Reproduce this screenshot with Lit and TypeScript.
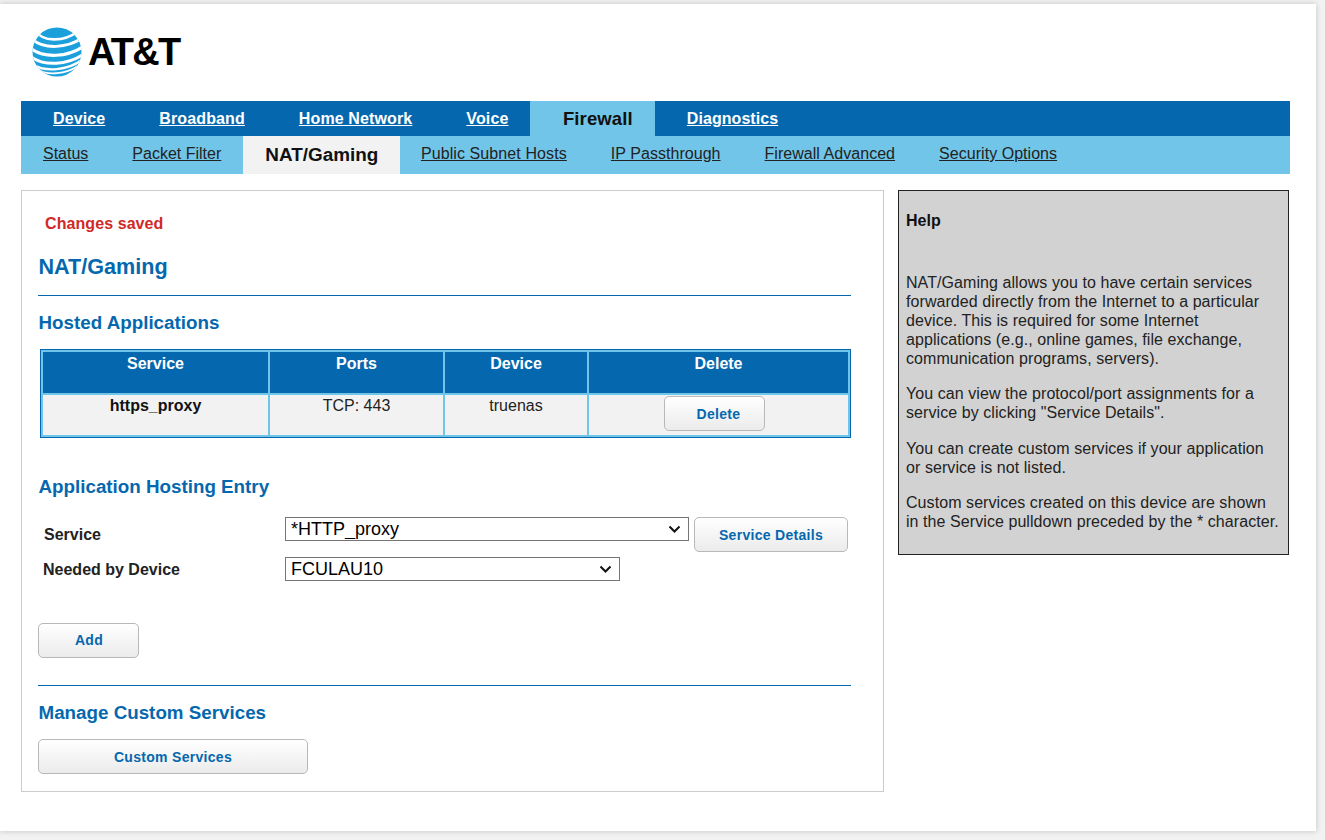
import { LitElement, html, css, svg } from "lit";
import { customElement } from "lit/decorators.js";

const TABS = ["Device", "Broadband", "Home Network", "Voice", "Firewall", "Diagnostics"];
const SUBTABS = ["Status", "Packet Filter", "NAT/Gaming", "Public Subnet Hosts", "IP Passthrough", "Firewall Advanced", "Security Options"];

const globe = svg`
  <svg class="globe" width="50" height="50" viewBox="0 0 50 50">
    <defs><clipPath id="g"><circle cx="25" cy="25" r="24.5"/></clipPath></defs>
    <g clip-path="url(#g)">
      <rect width="50" height="50" fill="#1ba0dc"/>
      <g fill="none" stroke="#fff">
        <path d="M4 4C10 15 32 15 45 5" stroke-width="2.6"/>
        <path d="M0 12C12 23 36 21 50 11" stroke-width="3"/>
        <path d="M-2 21C12 32 36 30 52 19" stroke-width="3.2"/>
        <path d="M-2 29C12 40 36 38 52 27" stroke-width="3"/>
        <path d="M0 37C14 46 36 43 50 33" stroke-width="2.4"/>
        <path d="M4 42C16 49 34 47 46 39" stroke-width="1.8"/>
      </g>
    </g>
  </svg>`;

const chevron = svg`
  <svg class="chev" width="13" height="8" viewBox="0 0 13 8">
    <path d="M1.5 1.5l5 5 5-5" fill="none" stroke="#111" stroke-width="2"/>
  </svg>`;

@customElement("app-root")
export class AppRoot extends LitElement {
  static styles = css`
    :host {
      display: block;
      background: #f2f2f2;
      height: 840px;
      padding-top: 4px;
      box-sizing: border-box;
      font-family: "Liberation Sans", Arial, sans-serif;
      color: #111;
    }
    .page {
      width: 1316px;
      height: 827px;
      box-sizing: border-box;
      background: #fff;
      box-shadow: 0 0 6px rgba(0, 0, 0, 0.2);
      padding: 0 26px 0 21px;
    }
    .logo {
      height: 97px;
      display: flex;
      align-items: flex-start;
      padding: 23px 0 0 11px;
      box-sizing: border-box;
    }
    .globe {
      flex: none;
    }
    .brand {
      font-size: 38px;
      font-weight: 700;
      letter-spacing: -1.8px;
      line-height: 50px;
      margin: 0 0 0 6px;
      color: #000;
    }
    nav {
      display: flex;
      height: 35px;
      background: #0568ae;
      width: 1269px;
    }
    nav a {
      font-size: 16px;
      font-weight: 700;
      letter-spacing: 0.12px;
      color: #fff;
      text-decoration: underline;
      line-height: 35px;
      padding: 0 27px;
    }
    nav a:first-child {
      padding-left: 32px;
    }
    nav a.voice {
      padding-right: 21.5px;
    }
    nav a.on {
      background: #71c5e8;
      color: #111;
      text-decoration: none;
      font-size: 18.5px;
      padding: 0 22px 0 33px;
    }
    nav a.after {
      padding-left: 32px;
      letter-spacing: 0.06px;
    }
    .sub {
      display: flex;
      height: 38px;
      background: #71c5e8;
      width: 1269px;
    }
    .sub a {
      font-size: 16px;
      color: #222;
      text-decoration: underline;
      line-height: 35px;
      padding: 0 22px;
    }
    .sub a.on {
      background: #f2f2f2;
      color: #111;
      font-weight: 700;
      font-size: 18.9px;
      line-height: 38px;
      text-decoration: none;
      padding-right: 21.6px;
    }
    .sub a.on ~ a {
      letter-spacing: 0.04px;
    }
    .sub a.on + a {
      padding-left: 21px;
      letter-spacing: 0.1px;
    }
    .cols {
      display: flex;
      align-items: flex-start;
      margin-top: 16px;
      gap: 14px;
    }
    .main {
      width: 863px;
      height: 602px;
      box-sizing: border-box;
      border: 1px solid #ccc;
      padding: 0 32px 0 16px;
    }
    .saved {
      color: #cf2a27;
      font-size: 16px;
      font-weight: 700;
      letter-spacing: 0.08px;
      margin: 23px 0 0 7px;
      line-height: 19px;
    }
    h1, h2 {
      color: #0568ae;
      margin: 0;
      font-weight: 700;
    }
    h1 {
      font-size: 21.6px;
      line-height: 26px;
      margin: 21px 0 15px 0.5px;
    }
    hr {
      border: 0;
      border-top: 1px solid #0568ae;
      margin: 0;
    }
    hr.blue {
      margin-top: 27px;
    }
    h2 {
      font-size: 18.8px;
      line-height: 22px;
      margin: 16px 0 0 0.5px;
    }
    table {
      width: 811px;
      margin: 15px 0 0 2px;
      border-collapse: separate;
      border-spacing: 2px;
      background: #71c5e8;
      border: 1px solid #0568ae;
      table-layout: fixed;
      font-size: 16px;
      box-sizing: border-box;
    }
    th, td {
      vertical-align: top;
      text-align: center;
      line-height: 19px;
      box-sizing: border-box;
    }
    th {
      background: #0568ae;
      color: #fff;
      height: 41px;
      padding: 2px 0 0;
    }
    td {
      background: #f2f2f2;
      color: #222;
      height: 40px;
      padding: 1px 0 0;
    }
    td.name {
      font-weight: 700;
      color: #111;
    }
    button {
      font-family: inherit;
      font-size: 14px;
      font-weight: 700;
      letter-spacing: 0.3px;
      color: #0568ae;
      height: 35px;
      box-sizing: border-box;
      border: 1px solid #b8b8b8;
      border-radius: 5px;
      background: linear-gradient(#fff, #ebebeb);
      padding: 0;
      display: block;
    }
    td button {
      width: 101px;
      margin-left: 75px;
      padding-left: 8px;
    }
    h2.entry {
      margin-top: 38px;
    }
    .form {
      display: grid;
      grid-template-columns: 247px 404px 1fr;
      grid-template-rows: 35px 24px;
      row-gap: 5px;
      align-items: center;
      margin-top: 19px;
    }
    .lbl {
      font-weight: 700;
      color: #222;
      font-size: 16px;
      padding-left: 6px;
    }
    .lbl.device {
      padding: 2px 0 0 5px;
    }
    .pick {
      position: relative;
      align-self: start;
      width: 404px;
    }
    .pick.device {
      width: 335px;
    }
    select {
      appearance: none;
      font-family: inherit;
      font-size: 18px;
      height: 24px;
      width: 100%;
      box-sizing: border-box;
      background: #fff;
      border: 1px solid #767676;
      border-radius: 0;
      color: #000;
      padding: 0 0 0 5px;
      display: block;
    }
    .chev {
      position: absolute;
      right: 8px;
      top: 8px;
      pointer-events: none;
    }
    .details {
      width: 154px;
      margin-left: 5px;
    }
    .add {
      width: 101px;
      margin-top: 42px;
      padding: 0 0 2px 1px;
    }
    .custom {
      width: 270px;
      margin-top: 15px;
    }
    aside {
      width: 391px;
      height: 365px;
      box-sizing: border-box;
      background: #d2d2d2;
      border: 1px solid #222;
      padding: 20px 7px 0;
      font-size: 16px;
      line-height: 19px;
      letter-spacing: 0.07px;
      color: #222;
    }
    aside h3 {
      margin: 0 0 43px;
      font-size: 16px;
      line-height: 19px;
      color: #111;
    }
    aside p {
      margin: 0 0 16px;
    }
    aside p:nth-of-type(2) {
      margin-bottom: 17px;
    }
  `;

  render() {
    return html`
      <div class="page">
        <div class="logo">${globe}<p class="brand">AT&amp;T</p></div>
        <nav>
          ${TABS.map((t) => html`<a class="${t === "Firewall" ? "on" : t === "Diagnostics" ? "after" : t === "Voice" ? "voice" : ""}">${t}</a>`)}
        </nav>
        <div class="sub">
          ${SUBTABS.map((t) => html`<a class="${t === "NAT/Gaming" ? "on" : ""}">${t}</a>`)}
        </div>
        <div class="cols">
          <section class="main">
            <div class="saved">Changes saved</div>
            <h1>NAT/Gaming</h1>
            <hr />
            <h2>Hosted Applications</h2>
            <table>
              <colgroup>
                <col style="width:225px" /><col style="width:173px" /><col style="width:142px" /><col style="width:259px" />
              </colgroup>
              <tr><th>Service</th><th>Ports</th><th>Device</th><th>Delete</th></tr>
              <tr>
                <td class="name">https_proxy</td>
                <td>TCP: 443</td>
                <td>truenas</td>
                <td><button>Delete</button></td>
              </tr>
            </table>
            <h2 class="entry">Application Hosting Entry</h2>
            <div class="form">
              <span class="lbl">Service</span>
              <div class="pick"><select><option>*HTTP_proxy</option></select>${chevron}</div>
              <button class="details">Service Details</button>
              <span class="lbl device">Needed by Device</span>
              <div class="pick device"><select><option>FCULAU10</option></select>${chevron}</div>
            </div>
            <button class="add">Add</button>
            <hr class="blue" />
            <h2>Manage Custom Services</h2>
            <button class="custom">Custom Services</button>
          </section>
          <aside>
            <h3>Help</h3>
            <p>NAT/Gaming allows you to have certain services forwarded directly from the Internet to a particular device. This is required for some Internet applications (e.g., online games, file exchange, communication programs, servers).</p>
            <p>You can view the protocol/port assignments for a service by clicking "Service Details".</p>
            <p>You can create custom services if your application or service is not listed.</p>
            <p>Custom services created on this device are shown in the Service pulldown preceded by the * character.</p>
          </aside>
        </div>
      </div>
    `;
  }
}
